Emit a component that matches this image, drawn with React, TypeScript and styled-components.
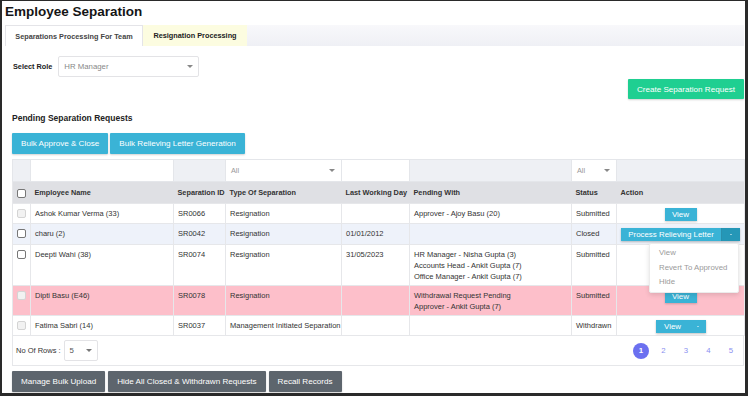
import React from 'react'
import styled, { createGlobalStyle } from 'styled-components'

const GlobalStyle = createGlobalStyle`
  html, body {
    margin: 0;
    padding: 0;
    background: #fff;
  }
  body {
    font-family: "Liberation Sans", Arial, sans-serif;
    color: #333;
  }
  * {
    box-sizing: border-box;
  }
`

interface RowI {
  name: string
  id: string
  type: string
  lastDay: string
  pending: string[]
  status: string
  action: 'view' | 'process' | 'split' | 'none'
  locked: boolean
  tone?: 'blue' | 'pink'
  height: number
}

const rows: RowI[] = [
  {
    name: 'Ashok Kumar Verma (33)',
    id: 'SR0066',
    type: 'Resignation',
    lastDay: '',
    pending: ['Approver - Ajoy Basu (20)'],
    status: 'Submitted',
    action: 'view',
    locked: true,
    height: 20,
  },
  {
    name: 'charu (2)',
    id: 'SR0042',
    type: 'Resignation',
    lastDay: '01/01/2012',
    pending: [],
    status: 'Closed',
    action: 'process',
    locked: false,
    tone: 'blue',
    height: 21,
  },
  {
    name: 'Deepti Wahi (38)',
    id: 'SR0074',
    type: 'Resignation',
    lastDay: '31/05/2023',
    pending: [
      'HR Manager - Nisha Gupta (3)',
      'Accounts Head - Ankit Gupta (7)',
      'Office Manager - Ankit Gupta (7)',
    ],
    status: 'Submitted',
    action: 'none',
    locked: false,
    height: 41,
  },
  {
    name: 'Dipti Basu (E46)',
    id: 'SR0078',
    type: 'Resignation',
    lastDay: '',
    pending: ['Withdrawal Request Pending', 'Approver - Ankit Gupta (7)'],
    status: 'Submitted',
    action: 'view',
    locked: true,
    tone: 'pink',
    height: 30,
  },
  {
    name: 'Fatima Sabri (14)',
    id: 'SR0037',
    type: 'Management Initiated Separation',
    lastDay: '',
    pending: [],
    status: 'Withdrawn',
    action: 'split',
    locked: true,
    height: 20,
  },
]

const columns = [18, 143, 52, 116, 68, 162, 45, 128]

const Frame = styled.div`
  width: 748px;
  height: 396px;
  border-style: solid;
  border-color: #2a2a2a;
  border-width: 1px 3px 3px 2px;
  overflow: hidden;
`

const Title = styled.h1`
  margin: 2px 0 4px 3px;
  font-size: 13.5px;
  line-height: 18px;
  font-weight: bold;
  color: #151515;
`

const TabBar = styled.div`
  display: flex;
  height: 21px;
  margin: 0 1px 0 3px;
  background: linear-gradient(#f8f8fb, #eff0f5);
`

const Tab = styled.div<{ $active?: boolean; $width: number }>`
  width: ${({ $width }) => $width}px;
  line-height: 21px;
  text-align: center;
  font-size: 7.3px;
  font-weight: bold;
  color: ${({ $active }) => ($active ? '#444' : '#222')};
  background: ${({ $active }) => ($active ? '#fff' : '#fcfce0')};
  border: ${({ $active }) => ($active ? '1px solid #e4e4e8' : 'none')};
  border-bottom: none;
`

const Content = styled.div`
  margin: 0 1px 0 10px;
`

const RoleRow = styled.div`
  display: flex;
  align-items: center;
  gap: 6px;
  height: 21px;
  margin-top: 10px;
`

const Label = styled.span`
  font-size: 7.3px;
  font-weight: bold;
  color: #222;
  padding-left: 1px;
`

const Select = styled.div<{ $width: number; $height: number }>`
  display: flex;
  align-items: center;
  justify-content: space-between;
  width: ${({ $width }) => $width}px;
  height: ${({ $height }) => $height}px;
  padding: 0 5px 0 5px;
  border: 1px solid #e3e3e6;
  border-radius: 2px;
  background: #fff;
  font-size: 7.8px;
  color: #888;
`

const Caret = styled.span<{ $color?: string; $size?: number }>`
  width: 0;
  height: 0;
  border-left: ${({ $size }) => $size ?? 3}px solid transparent;
  border-right: ${({ $size }) => $size ?? 3}px solid transparent;
  border-top: ${({ $size }) => $size ?? 3}px solid ${({ $color }) => $color ?? '#888'};
`

const CreateRow = styled.div`
  display: flex;
  justify-content: flex-end;
  margin-top: 2px;
`

const Button = styled.button<{ $bg: string; $height?: number }>`
  height: ${({ $height }) => $height ?? 21}px;
  padding: 0 9px;
  border: none;
  border-radius: 1px;
  background: ${({ $bg }) => $bg};
  color: #fff;
  font-family: "Liberation Sans", Arial, sans-serif;
  font-size: 8.1px;
  box-shadow: 0 1px 2px rgba(0, 0, 0, 0.18);
  cursor: pointer;
`

const SectionTitle = styled.h2`
  margin: 13px 0 0 0;
  font-size: 8.5px;
  line-height: 12px;
  font-weight: bold;
  color: #222;
`

const ButtonRow = styled.div<{ $top: number; $gap: number }>`
  display: flex;
  gap: ${({ $gap }) => $gap}px;
  margin-top: ${({ $top }) => $top}px;
`

const Table = styled.table`
  width: 732px;
  margin-top: 5px;
  table-layout: fixed;
  border-collapse: collapse;
  border: 1px solid #e6e7ea;
`

const FilterCell = styled.td<{ $white?: boolean }>`
  height: 22px;
  padding: 0;
  background: ${({ $white }) => ($white ? '#fff' : '#eef0f4')};
  border: 1px solid #e4e6ea;
`

const FilterSelect = styled.div`
  display: flex;
  align-items: center;
  justify-content: space-between;
  height: 100%;
  padding: 0 6px 0 5px;
  font-size: 7.3px;
  color: #999;
`

const HeadCell = styled.th`
  height: 22px;
  padding: 0 4px;
  background: #dfe0e4;
  text-align: left;
  font-size: 7.3px;
  font-weight: bold;
  color: #333;
  white-space: nowrap;
`

const Row = styled.tr<{ $tone?: 'blue' | 'pink' }>`
  background: ${({ $tone }) =>
    $tone === 'pink' ? '#fdbfca' : $tone === 'blue' ? '#eef2fa' : '#fff'};
`

const Cell = styled.td<{ $center?: boolean }>`
  padding: 4px 4px 0;
  vertical-align: top;
  border: 1px solid #e6e7ea;
  font-size: 7.5px;
  line-height: 11px;
  color: #333;
  white-space: nowrap;
  text-align: ${({ $center }) => ($center ? 'center' : 'left')};
`

const Check = styled.span<{ $locked?: boolean }>`
  display: block;
  width: 9px;
  height: 9px;
  margin: 1px auto 0;
  border: 1px solid ${({ $locked }) => ($locked ? '#d4d4d4' : '#777')};
  border-radius: 2px;
  background: ${({ $locked }) => ($locked ? '#f2f2f2' : '#fff')};
`

const ActionButton = styled.span<{ $width?: number }>`
  display: inline-flex;
  align-items: center;
  justify-content: center;
  width: ${({ $width }) => $width ?? 32}px;
  height: 13px;
  background: #3ab3d6;
  color: #fff;
  font-size: 8px;
  box-shadow: 0 1px 2px rgba(0, 0, 0, 0.2);
  vertical-align: top;
`

const Split = styled.span`
  position: relative;
  display: inline-flex;
  height: 13px;
  vertical-align: top;
  box-shadow: 0 1px 2px rgba(0, 0, 0, 0.25);
`

const SplitMain = styled.span<{ $width: number }>`
  display: flex;
  align-items: center;
  justify-content: center;
  width: ${({ $width }) => $width}px;
  background: #3ab3d6;
  color: #fff;
  font-size: 7.9px;
`

const SplitToggle = styled.span<{ $dark?: boolean; $width: number }>`
  display: flex;
  align-items: center;
  justify-content: center;
  width: ${({ $width }) => $width}px;
  background: ${({ $dark }) => ($dark ? '#2597b7' : '#3ab3d6')};
  border-left: ${({ $dark }) => ($dark ? '1px solid #2a8fac' : 'none')};
`

const Menu = styled.div`
  position: absolute;
  top: calc(100% + 2px);
  right: 1px;
  z-index: 2;
  width: 90px;
  padding: 2px 0;
  background: #fff;
  border: 1px solid #ececec;
  border-radius: 2px;
  box-shadow: 0 2px 5px rgba(0, 0, 0, 0.12);
  text-align: left;
`

const MenuItem = styled.div`
  padding-left: 9px;
  line-height: 14.5px;
  font-size: 7.8px;
  color: #9a9a9a;
`

const Footer = styled.div`
  display: flex;
  align-items: center;
  justify-content: space-between;
  width: 732px;
  height: 30px;
  padding: 0 4px 0 3px;
  border: 1px solid #e6e7ea;
  border-top: none;
`

const RowsPicker = styled.div`
  display: flex;
  align-items: center;
  gap: 3px;
  font-size: 7.5px;
  color: #333;
`

const Pager = styled.div`
  display: flex;
  gap: 6.5px;
`

const Page = styled.span<{ $active?: boolean }>`
  display: flex;
  align-items: center;
  justify-content: center;
  width: 16px;
  height: 16px;
  border-radius: 50%;
  background: ${({ $active }) => ($active ? '#6b70f0' : 'transparent')};
  color: ${({ $active }) => ($active ? '#fff' : '#8b90f0')};
  font-size: 7.8px;
  font-weight: ${({ $active }) => ($active ? 'bold' : 'normal')};
`

const ActionContent = ({ row }: { row: RowI }) => {
  if (row.action === 'view') return <ActionButton>View</ActionButton>
  if (row.action === 'process')
    return (
      <Split>
        <SplitMain $width={100}>Process Relieving Letter</SplitMain>
        <SplitToggle $dark $width={19}>
          <Caret $color="#fff" $size={1.5} />
        </SplitToggle>
        <Menu>
          <MenuItem>View</MenuItem>
          <MenuItem>Revert To Approved</MenuItem>
          <MenuItem>Hide</MenuItem>
        </Menu>
      </Split>
    )
  if (row.action === 'split')
    return (
      <Split>
        <SplitMain $width={34}>View</SplitMain>
        <SplitToggle $width={16}>
          <Caret $color="#fff" $size={1.5} />
        </SplitToggle>
      </Split>
    )
  return null
}

export default function App() {
  return (
    <>
      <GlobalStyle />
      <Frame>
        <Title>Employee Separation</Title>
        <TabBar>
          <Tab $active $width={138}>
            Separations Processing For Team
          </Tab>
          <Tab $width={104}>Resignation Processing</Tab>
        </TabBar>
        <Content>
          <RoleRow>
            <Label>Select Role</Label>
            <Select $width={141} $height={21}>
              HR Manager
              <Caret />
            </Select>
          </RoleRow>
          <CreateRow>
            <Button $bg="#1fcf91" $height={20}>
              Create Separation Request
            </Button>
          </CreateRow>
          <SectionTitle>Pending Separation Requests</SectionTitle>
          <ButtonRow $top={9} $gap={2}>
            <Button $bg="#3ab3d6">Bulk Approve &amp; Close</Button>
            <Button $bg="#3ab3d6">Bulk Relieving Letter Generation</Button>
          </ButtonRow>
          <Table>
            <colgroup>
              {columns.map((w, i) => (
                <col key={i} style={{ width: w }} />
              ))}
            </colgroup>
            <thead>
              <tr>
                <FilterCell />
                <FilterCell $white />
                <FilterCell />
                <FilterCell $white>
                  <FilterSelect>
                    All
                    <Caret />
                  </FilterSelect>
                </FilterCell>
                <FilterCell $white />
                <FilterCell />
                <FilterCell $white>
                  <FilterSelect>
                    All
                    <Caret />
                  </FilterSelect>
                </FilterCell>
                <FilterCell />
              </tr>
              <tr>
                <HeadCell>
                  <Check />
                </HeadCell>
                <HeadCell>Employee Name</HeadCell>
                <HeadCell>Separation ID</HeadCell>
                <HeadCell>Type Of Separation</HeadCell>
                <HeadCell>Last Working Day</HeadCell>
                <HeadCell>Pending With</HeadCell>
                <HeadCell>Status</HeadCell>
                <HeadCell>Action</HeadCell>
              </tr>
            </thead>
            <tbody>
              {rows.map((row) => (
                <Row key={row.id} $tone={row.tone} style={{ height: row.height }}>
                  <Cell>
                    <Check $locked={row.locked} />
                  </Cell>
                  <Cell>{row.name}</Cell>
                  <Cell>{row.id}</Cell>
                  <Cell>{row.type}</Cell>
                  <Cell>{row.lastDay}</Cell>
                  <Cell>
                    {row.pending.map((p) => (
                      <div key={p}>{p}</div>
                    ))}
                  </Cell>
                  <Cell>{row.status}</Cell>
                  <Cell $center>
                    <ActionContent row={row} />
                  </Cell>
                </Row>
              ))}
            </tbody>
          </Table>
          <Footer>
            <RowsPicker>
              No Of Rows :
              <Select $width={34} $height={21}>
                <span style={{ color: '#555' }}>5</span>
                <Caret $color="#777" />
              </Select>
            </RowsPicker>
            <Pager>
              {[1, 2, 3, 4, 5].map((n) => (
                <Page key={n} $active={n === 1}>
                  {n}
                </Page>
              ))}
            </Pager>
          </Footer>
          <ButtonRow $top={5} $gap={3}>
            <Button $bg="#5d656d">Manage Bulk Upload</Button>
            <Button $bg="#5d656d">Hide All Closed &amp; Withdrawn Requests</Button>
            <Button $bg="#5d656d">Recall Records</Button>
          </ButtonRow>
        </Content>
      </Frame>
    </>
  )
}
